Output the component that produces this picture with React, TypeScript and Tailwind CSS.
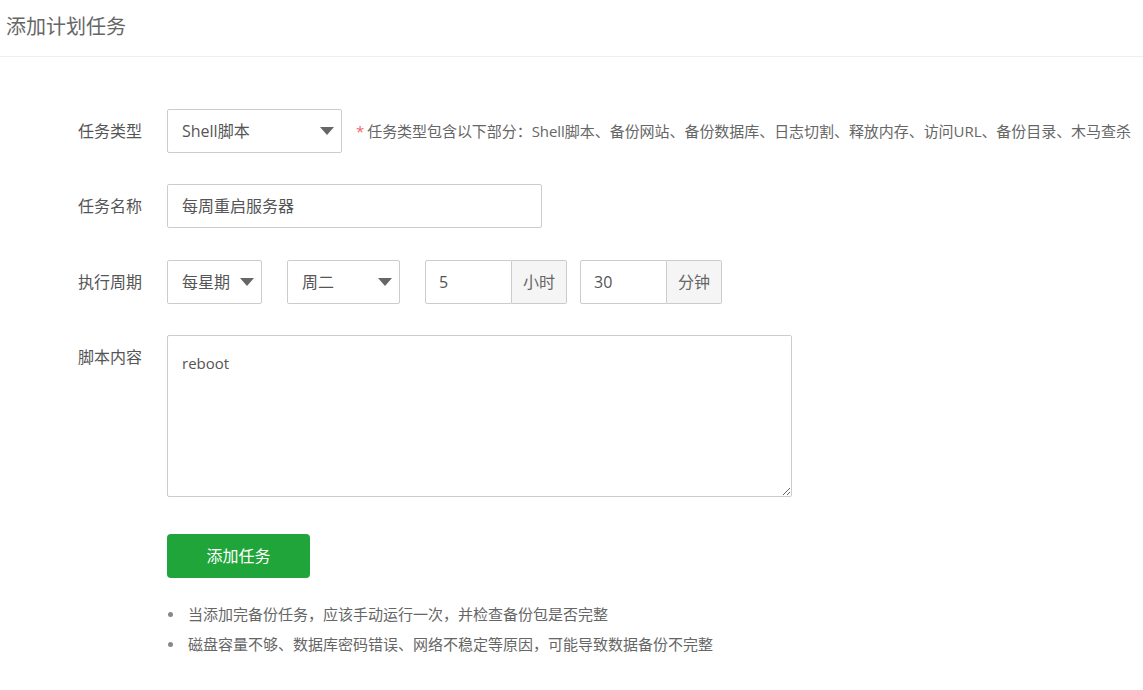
import React from "react";

function Arrow() {
  return (
    <span className="h-0 w-0 border-x-[7px] border-t-[8px] border-x-transparent border-t-[#666]" />
  );
}

function FakeSelect({ value, width }: { value: string; width: string }) {
  return (
    <div
      className={`flex h-[44px] ${width} items-center justify-between rounded-[2px] border border-[#ccc] bg-white pl-[14px] pr-[7px] text-[16px] text-[#555]`}
    >
      <span>{value}</span>
      <Arrow />
    </div>
  );
}

function Row({ label, className, children }: { label: string; className?: string; children: React.ReactNode }) {
  return (
    <div className={`flex items-start ${className ?? ""}`}>
      <div className="flex h-[44px] w-[89px] shrink-0 items-center text-[16px] text-[#555]">{label}</div>
      {children}
    </div>
  );
}

function TimeInput({ value, unit }: { value: string; unit: string }) {
  return (
    <div className="flex h-[44px]">
      <div className="flex w-[87px] items-center rounded-l-[2px] border border-[#ccc] bg-white pl-[13px] text-[16px] text-[#555]">
        {value}
      </div>
      <div className="flex w-[55px] items-center justify-center rounded-r-[2px] border border-l-0 border-[#ccc] bg-[#f5f5f5] text-[16px] text-[#666]">
        {unit}
      </div>
    </div>
  );
}

export default function App() {
  return (
    <div
      className="min-h-screen bg-white"
      style={{ fontFamily: '"Open Sans", "Noto Sans CJK SC", sans-serif' }}
    >
      {/* Header */}
      <div className="flex h-[57px] items-center border-b border-[#eee] pl-[6px] pb-[2px]">
        <h1 className="text-[20px] text-[#666]">添加计划任务</h1>
      </div>

      {/* Form */}
      <div className="flex flex-col pl-[78px] pt-[52px]">
        <Row label="任务类型">
          <FakeSelect value="Shell脚本" width="w-[175px]" />
          <div className="ml-[14px] flex h-[44px] items-center whitespace-nowrap text-[15px] tracking-[-0.05px] text-[#666]">
            <span className="mr-[3px] text-[#e66]">*</span>
            任务类型包含以下部分：Shell脚本、备份网站、备份数据库、日志切割、释放内存、访问URL、备份目录、木马查杀
          </div>
        </Row>

        <Row label="任务名称" className="mt-[31px]">
          <div className="flex h-[44px] w-[375px] items-center rounded-[2px] border border-[#ccc] pl-[14px] text-[16px] text-[#555]">
            每周重启服务器
          </div>
        </Row>

        <Row label="执行周期" className="mt-[32px]">
          <div className="flex items-center">
            <FakeSelect value="每星期" width="w-[95px]" />
            <div className="ml-[25px]">
              <FakeSelect value="周二" width="w-[113px]" />
            </div>
            <div className="ml-[25px]">
              <TimeInput value="5" unit="小时" />
            </div>
            <div className="ml-[13px]">
              <TimeInput value="30" unit="分钟" />
            </div>
          </div>
        </Row>

        <Row label="脚本内容" className="mt-[31px]">
          <textarea
            defaultValue="reboot"
            className="h-[162px] w-[625px] resize rounded-[2px] border border-[#ccc] px-[14px] pt-[16px] pb-[14px] text-[15px] text-[#555] outline-none"
            style={{ fontFamily: '"Open Sans", "Noto Sans CJK SC", sans-serif' }}
          />
        </Row>
      </div>

      <div className="pl-[167px] pt-[37px]">
        <button className="flex h-[44px] w-[143px] items-center justify-center rounded-[4px] bg-[#20a53a] text-[16px] text-white">
          添加任务
        </button>
        <ul className="mt-[21px] text-[15px] text-[#666]">
          {[
            "当添加完备份任务，应该手动运行一次，并检查备份包是否完整",
            "磁盘容量不够、数据库密码错误、网络不稳定等原因，可能导致数据备份不完整",
          ].map((t) => (
            <li key={t} className="flex h-[30px] items-center">
              <span className="ml-[1px] mr-[15px] h-[5px] w-[5px] rounded-full bg-[#888]" />
              {t}
            </li>
          ))}
        </ul>
      </div>
    </div>
  );
}
